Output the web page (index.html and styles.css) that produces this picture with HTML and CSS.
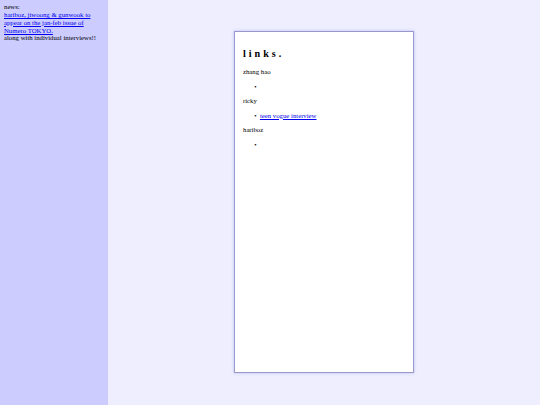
FILE: index.html
```html
<!DOCTYPE html>
<html>
<head>
<meta charset="utf-8">
<title>links</title>
<link rel="stylesheet" href="styles.css">
</head>
<body>
<div class="page">
  <aside class="sidebar">
    news:<br>
    <a href="#">hariboz, jiwoong &amp; gunwook to appear on the jan-feb issue of Numero TOKYO.</a><br>
    along with individual interviews!!
  </aside>
  <main class="main">
    <div class="card">
      <h2 class="title">links.</h2>
      <p class="name">zhang hao</p>
      <ul class="list"><li></li></ul>
      <p class="name">ricky</p>
      <ul class="list"><li><a href="#">teen vogue interview</a></li></ul>
      <p class="name">hariboz</p>
      <ul class="list"><li></li></ul>
    </div>
  </main>
</div>
</body>
</html>
```
FILE: styles.css
```css
html, body {
  margin: 0;
  padding: 0;
  height: 100%;
}
body {
  font-family: "Liberation Serif", "Times New Roman", serif;
  font-size: 6.75px;
  line-height: 7.75px;
  color: #000;
  background: #eeeeff;
}
.page {
  display: flex;
  height: 100%;
}
.sidebar {
  width: 100px;
  flex: none;
  padding: 3.4px 4px;
  background: #ccccff;
}
a {
  color: #0000ee;
}
.main {
  flex: 1;
  display: flex;
  justify-content: center;
  align-items: flex-start;
}
.card {
  margin-top: 31px;
  width: 162px;
  height: 324px;
  padding: 8px;
  background: #fff;
  border: 1px solid #9999cc;
  box-shadow: 0 0 3px #bbbbee;
}
.title {
  font-size: 10.125px;
  line-height: 11.6px;
  letter-spacing: 3px;
  margin: 8.4px 0;
}
.name {
  margin: 6.75px 0;
}
.list {
  margin: 6.75px 0;
  padding-left: 16.9px;
}
.list li::marker {
  content: "\2022\00a0\00a0";
}
```
